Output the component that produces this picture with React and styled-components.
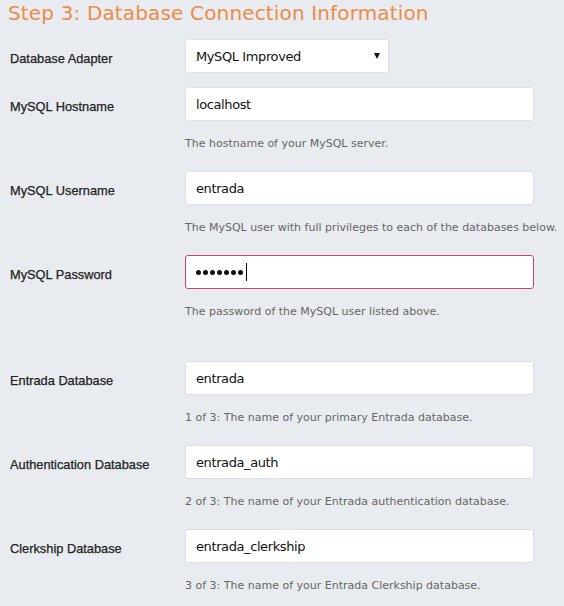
import React from "react";
import styled, { createGlobalStyle } from "styled-components";

const Global = createGlobalStyle`
  html, body { margin: 0; padding: 0; background: #e8ecf0; }
  body { width: 564px; height: 606px; overflow: hidden; }
`;

const Page = styled.div`
  padding: 0 0 0 10px;
  background: #e8ecf0;
  min-height: 606px;
`;

const Title = styled.h2`
  margin: 0 0 0 -2px;
  padding-top: 1px;
  height: 38px;
  font-family: "DejaVu Sans", Verdana, sans-serif;
  font-weight: normal;
  font-size: 20px;
  line-height: 24px;
  letter-spacing: 0.15px;
  color: #ee8a48;
`;

const Field = styled.div`
  display: grid;
  grid-template-columns: 175px 349px;
  margin-top: ${(p) => (p.$gap ? "36px" : "14px")};
  &:first-of-type { margin-top: 0; }
`;

const Label = styled.label`
  padding-top: 12px;
  font-family: "Liberation Sans", Arial, sans-serif;
  font-size: 12.8px;
  line-height: 16px;
  color: #222;
  -webkit-text-stroke: 0.25px #222;
`;

const Control = styled.div`
  display: flex;
  flex-direction: column;
`;

const Input = styled.div`
  box-sizing: border-box;
  width: ${(p) => p.$w || "349px"};
  height: 34px;
  padding: 0 10px;
  display: flex;
  align-items: center;
  justify-content: ${(p) => (p.$select ? "space-between" : "flex-start")};
  background: #fff;
  border: 1px solid ${(p) => (p.$error ? "#d0406a" : "#dde1e5")};
  border-radius: 3px;
  font-family: "DejaVu Sans", Verdana, sans-serif;
  font-size: 13px;
  letter-spacing: -0.4px;
  color: #111;
`;

const Dots = styled.span`
  display: flex;
  align-items: center;
  gap: 2px;
`;

const Dot = styled.span`
  width: 5px;
  height: 5px;
  border-radius: 50%;
  background: #111;
`;

const Caret = styled.span`
  width: 1px;
  height: 18px;
  background: #000;
  margin-left: 3px;
`;

const Arrow = styled.span`
  width: 0;
  height: 0;
  border-left: 3.5px solid transparent;
  border-right: 3.5px solid transparent;
  border-top: 6px solid #111;
  margin-right: -2px;
`;

const Help = styled.div`
  margin: 16px 0 6px;
  font-family: "DejaVu Sans", Verdana, sans-serif;
  font-size: 11px;
  line-height: 14px;
  letter-spacing: 0;
  color: #666;
  white-space: nowrap;
`;

const fields = [
  { label: "MySQL Hostname", value: "localhost", help: "The hostname of your MySQL server." },
  { label: "MySQL Username", value: "entrada", help: "The MySQL user with full privileges to each of the databases below." },
  { label: "MySQL Password", password: true, help: "The password of the MySQL user listed above." },
  { label: "Entrada Database", value: "entrada", help: "1 of 3: The name of your primary Entrada database.", gap: true },
  { label: "Authentication Database", value: "entrada_auth", help: "2 of 3: The name of your Entrada authentication database." },
  { label: "Clerkship Database", value: "entrada_clerkship", help: "3 of 3: The name of your Entrada Clerkship database." },
];

export default function App() {
  return (
    <Page>
      <Global />
      <Title>Step 3: Database Connection Information</Title>
      <Field>
        <Label>Database Adapter</Label>
        <Control>
          <Input $w="204px" $select>
            <span>MySQL Improved</span>
            <Arrow />
          </Input>
        </Control>
      </Field>
      {fields.map((f) => (
        <Field key={f.label} $gap={f.gap}>
          <Label>{f.label}</Label>
          <Control>
            {f.password ? (
              <Input $error>
                <Dots>
                  {Array.from({ length: 7 }).map((_, i) => (
                    <Dot key={i} />
                  ))}
                </Dots>
                <Caret />
              </Input>
            ) : (
              <Input>{f.value}</Input>
            )}
            <Help>{f.help}</Help>
          </Control>
        </Field>
      ))}
    </Page>
  );
}
